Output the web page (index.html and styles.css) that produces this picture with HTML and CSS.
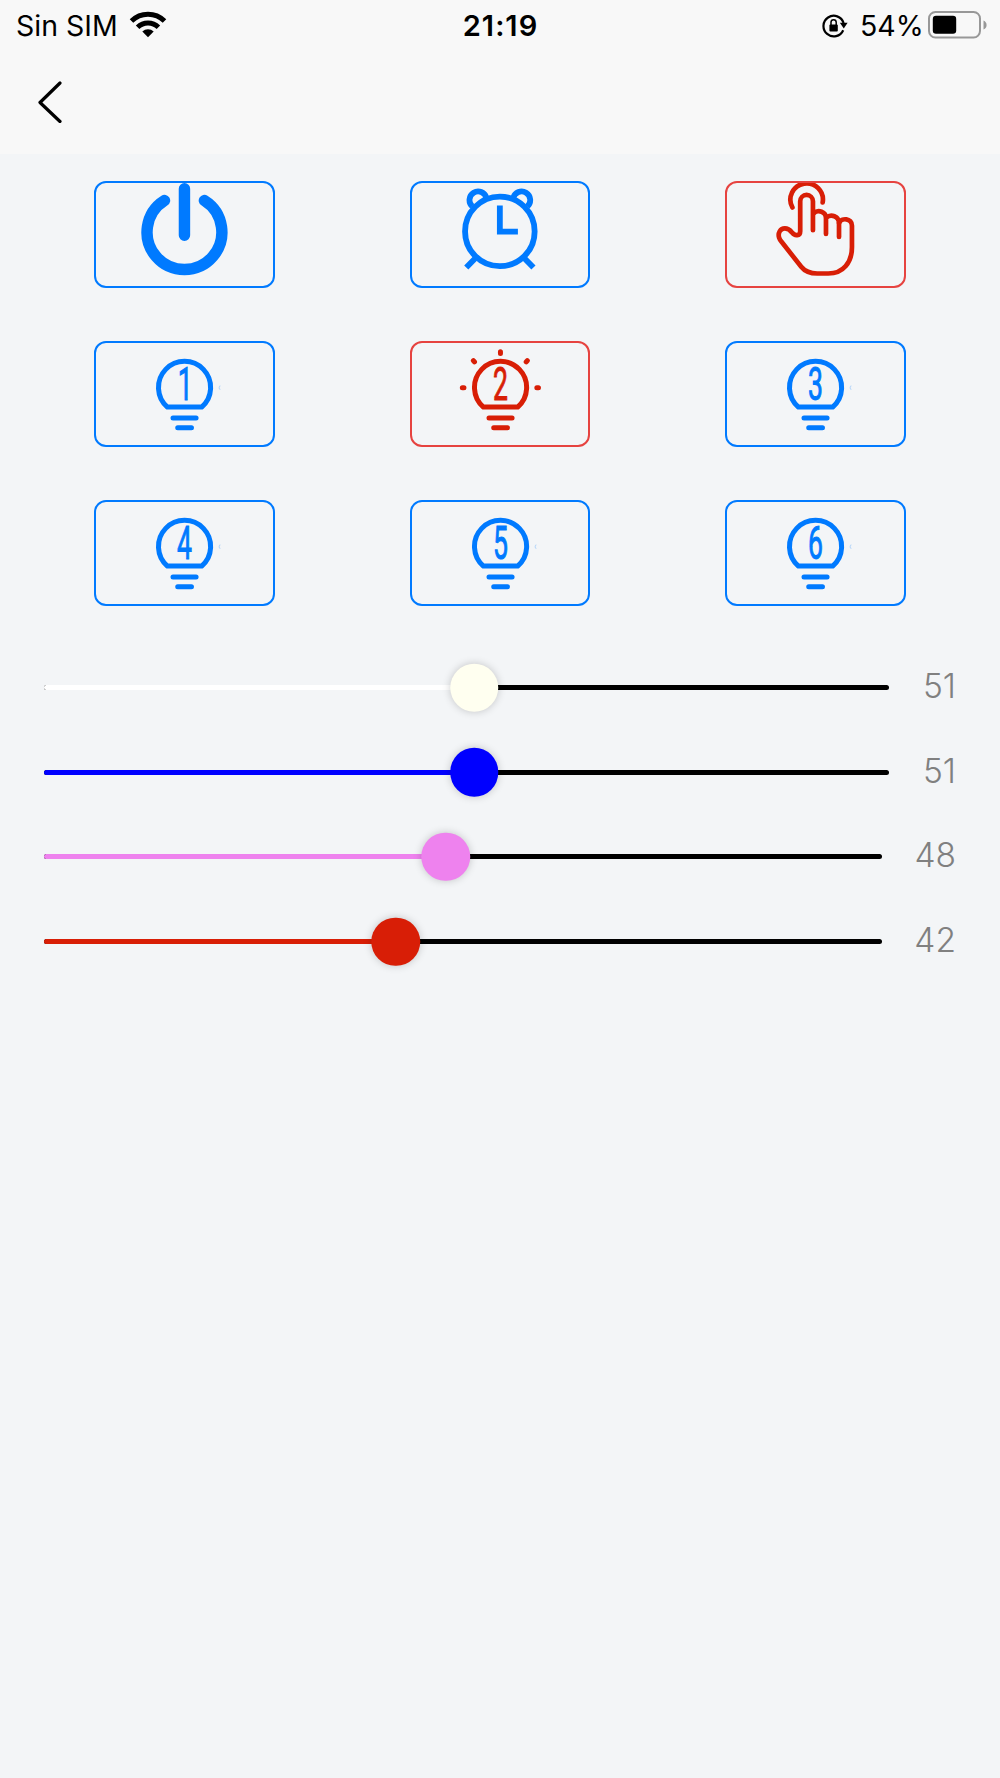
FILE: index.html
```html
<!DOCTYPE html>
<html lang="es">
<head>
  <meta charset="UTF-8">
  <meta name="viewport" content="width=device-width, initial-scale=1.0">
  <title>Control de luces</title>
  <link rel="stylesheet" href="styles.css">
</head>
<body>

  <!-- Shared bulb shape -->
  <svg class="defs" aria-hidden="true">
    <symbol id="bulb" viewBox="0 0 176 102">
      <g fill="none" stroke="currentColor" stroke-width="5" stroke-linecap="round" stroke-linejoin="round">
        <path d="M71.2 63.8A26 26 0 1 1 105.4 63.8Z"/>
        <path d="M76.8 74.8H99.8M81.5 84.5H95.2"/>
      </g>
    </symbol>
  </svg>

  <header class="header">
    <div class="status">
      <div class="status-left">
        <span class="carrier">Sin SIM</span>
        <svg class="wifi" width="38" height="28" viewBox="0 0 38 28">
          <g fill="none" stroke="#000" stroke-width="5">
            <path d="M2.5 11A23.5 23.5 0 0 1 35.5 11"/>
            <path d="M8.6 17.3A14.8 14.8 0 0 1 29.4 17.3"/>
          </g>
          <path d="M19 27.2L13.3 21.6A8.2 8.2 0 0 1 24.7 21.6Z"/>
        </svg>
      </div>
      <span class="time">21:19</span>
      <div class="status-right">
        <svg class="lock" width="26" height="24" viewBox="0 0 26 24">
          <path d="M21.2 16.2A10.3 10.3 0 1 1 21.6 9" fill="none" stroke="#000" stroke-width="2.2"/>
          <path d="M17.8 8.8H25.6L21.8 14.4Z"/>
          <path d="M9 11V8.3a2.6 2.6 0 0 1 5.2 0V11" fill="none" stroke="#000" stroke-width="1.5"/>
          <rect x="7.4" y="10.6" width="8.4" height="6.8" rx="1"/>
        </svg>
        <span class="percent">54%</span>
        <svg class="battery" width="59" height="28" viewBox="0 0 59 28">
          <rect x="1" y="1" width="51" height="25.5" rx="6.5" fill="none" stroke="#989898" stroke-width="2"/>
          <rect x="4.8" y="4.8" width="23.4" height="18" rx="3.2"/>
          <path d="M55.5 9.5Q58.6 11 58.6 14Q58.6 17 55.5 18.5Z" fill="#989898"/>
        </svg>
      </div>
    </div>
    <button class="back" aria-label="Volver">
      <svg width="24" height="42" viewBox="0 0 24 42">
        <path d="M22 2L2 21.5L22 40.5" fill="none" stroke="#000" stroke-width="3.2" stroke-linecap="round" stroke-linejoin="round"/>
      </svg>
    </button>
  </header>

  <main>
    <div class="grid">
      <button class="key" aria-label="Encender">
        <svg viewBox="0 0 176 102" fill="none" stroke="currentColor" stroke-width="11.4" stroke-linecap="round">
          <path d="M68.3 17.4A37.3 37.3 0 1 0 108.1 17.4M88.2 5.7V52"/>
        </svg>
      </button>
      <button class="key" aria-label="Alarma">
        <svg viewBox="0 0 176 102" fill="none" stroke="currentColor" stroke-width="5.8">
          <circle cx="87.6" cy="48.2" r="34.7"/>
          <path d="M87.6 22.4V48.4H105.6"/>
          <path d="M60.1 23.3A8.6 8.6 0 1 1 74.2 14.6M115.1 23.3A8.6 8.6 0 1 0 101 14.6"/>
          <path d="M63.4 74.7L54.1 84.2M111.8 74.7L121.1 84.2"/>
        </svg>
      </button>
      <button class="key on" aria-label="Manual">
        <svg viewBox="0 0 176 102" fill="none" stroke="currentColor" stroke-width="4.7" stroke-linecap="round" stroke-linejoin="round">
          <path d="M65.2 24.3A16.2 16.2 0 1 1 95.4 19.3"/>
          <path d="M85.7 47V18.2A6.35 6.35 0 0 0 73 18.2V48C73 53 67.5 53 65 49.5C62.5 46.5 60.5 45.3 57.7 45.3C53 45.3 50.5 50 52 54.5C52.4 55.7 53 56.8 54 58L74 83.5C78 88.5 83 90.2 90 90.2H101C116 90.2 124.6 79 124.6 64V42.5C124.6 35 114 34 111.7 40V53.7"/>
          <path d="M86.5 30C91 26 98.7 28.5 98.7 35V50.7M99.2 34.5C103.5 30.5 111.7 33 111.7 40"/>
        </svg>
      </button>
      <button class="key">
        <svg viewBox="0 0 176 102">
          <use href="#bulb"/>
          <path class="speck" d="M124 42.5Q121.5 44.5 124 46.5"/>
          <text class="digit" transform="translate(89 57) scale(.57 1)">1</text>
        </svg>
      </button>
      <button class="key on">
        <svg viewBox="0 0 176 102">
          <use href="#bulb"/>
          <path d="M88.2 8.7V10.3M50.2 44.5H51.8M124.5 44.5H126.1M61.2 17.5L62.3 18.8M115 17.5L113.9 18.8" fill="none" stroke="currentColor" stroke-width="5" stroke-linecap="round"/>
          <text class="digit" transform="translate(88.2 57) scale(.57 1)">2</text>
        </svg>
      </button>
      <button class="key">
        <svg viewBox="0 0 176 102">
          <use href="#bulb"/>
          <path class="speck" d="M124 42.5Q121.5 44.5 124 46.5"/>
          <text class="digit" transform="translate(88.2 57) scale(.57 1)">3</text>
        </svg>
      </button>
      <button class="key">
        <svg viewBox="0 0 176 102">
          <use href="#bulb"/>
          <path class="speck" d="M124 42.5Q121.5 44.5 124 46.5"/>
          <text class="digit" transform="translate(88.2 57) scale(.57 1)">4</text>
        </svg>
      </button>
      <button class="key">
        <svg viewBox="0 0 176 102">
          <use href="#bulb"/>
          <path class="speck" d="M124 42.5Q121.5 44.5 124 46.5"/>
          <text class="digit" transform="translate(88.2 57) scale(.57 1)">5</text>
        </svg>
      </button>
      <button class="key">
        <svg viewBox="0 0 176 102">
          <use href="#bulb"/>
          <path class="speck" d="M124 42.5Q121.5 44.5 124 46.5"/>
          <text class="digit" transform="translate(88.2 57) scale(.57 1)">6</text>
        </svg>
      </button>
    </div>

    <div class="sliders">
      <div class="slider white">
        <div class="track"><div class="fill" style="width: 51%"><span class="thumb"></span></div></div>
        <span class="value narrow">51</span>
      </div>
      <div class="slider blue">
        <div class="track"><div class="fill" style="width: 51%"><span class="thumb"></span></div></div>
        <span class="value narrow">51</span>
      </div>
      <div class="slider violet">
        <div class="track"><div class="fill" style="width: 48%"><span class="thumb"></span></div></div>
        <span class="value">48</span>
      </div>
      <div class="slider red">
        <div class="track"><div class="fill" style="width: 42%"><span class="thumb"></span></div></div>
        <span class="value">42</span>
      </div>
    </div>
  </main>

</body>
</html>
```
FILE: styles.css
```css
* {
  box-sizing: border-box;
}

body {
  margin: 0;
  min-height: 1778px;
  font-family: Inter, "Liberation Sans", sans-serif;
  background-color: #f3f5f7;
}

button {
  padding: 0;
  background: none;
  border: none;
}

svg {
  display: block;
}

.defs {
  position: absolute;
  width: 0;
  height: 0;
}

.header {
  height: 154px;
  background-color: #f8f8f8;
}

.status {
  display: grid;
  grid-template-columns: 1fr auto 1fr;
  align-items: center;
  height: 51px;
  padding: 0 13px 0 16px;
  font-size: 28.5px;
  line-height: 50px;
}

.status-left,
.status-right {
  display: flex;
  align-items: center;
}

.status-right {
  justify-content: flex-end;
}

.carrier {
  width: 112.5px;
  white-space: nowrap;
}

.wifi {
  margin-bottom: 4px;
}

.time {
  margin-right: 2px;
  font-size: 29px;
  font-weight: 600;
  letter-spacing: 1px;
}

.lock {
  margin-top: 1px;
}

.percent {
  width: 62px;
  margin-left: 12px;
  white-space: nowrap;
}

.battery {
  margin: 0 0 2px 6px;
}

.back {
  display: block;
  margin: 30px 0 0 38.3px;
}

.grid {
  display: grid;
  grid-template-columns: repeat(3, 180.5px);
  justify-content: space-between;
  row-gap: 53px;
  padding: 27.3px 94.3px 0;
}

.key {
  height: 106.4px;
  border: 2px solid #007aff;
  border-radius: 12px;
  color: #007aff;
}

.key svg {
  width: 100%;
  height: 100%;
}

.key.on {
  border-color: #e64340;
  color: #d81e06;
}

.digit {
  font-family: Roboto, sans-serif;
  font-size: 46.5px;
  text-anchor: middle;
  fill: currentColor;
  stroke: currentColor;
  stroke-width: 1;
}

.speck {
  fill: none;
  stroke: currentColor;
  opacity: 0.25;
}

.sliders {
  padding: 39px 44px 0 43.5px;
}

.slider {
  display: flex;
  align-items: center;
  height: 84.6px;
}

.track {
  flex: 1;
  height: 5px;
  border-radius: 3px;
  background-color: #000;
}

.fill {
  position: relative;
  height: 5px;
  border-radius: 3px;
  background-color: var(--color);
}

.thumb {
  position: absolute;
  top: 50%;
  right: 0;
  width: 48.5px;
  height: 48.5px;
  border-radius: 50%;
  background-color: var(--color);
  box-shadow: 0 0 9px rgba(0, 0, 0, 0.2);
  transform: translate(50%, -50%);
}

.value {
  width: 74px;
  padding-bottom: 3px;
  font-size: 33.5px;
  font-weight: 300;
  line-height: 40px;
  text-align: right;
  color: #808080;
}

.narrow {
  width: 67.5px;
}

.white {
  --color: #fff;
}

.white .thumb {
  background-color: #fffff0;
}

.blue {
  --color: #00f;
}

.violet {
  --color: #ee82ee;
}

.red {
  --color: #d81e06;
}
```
